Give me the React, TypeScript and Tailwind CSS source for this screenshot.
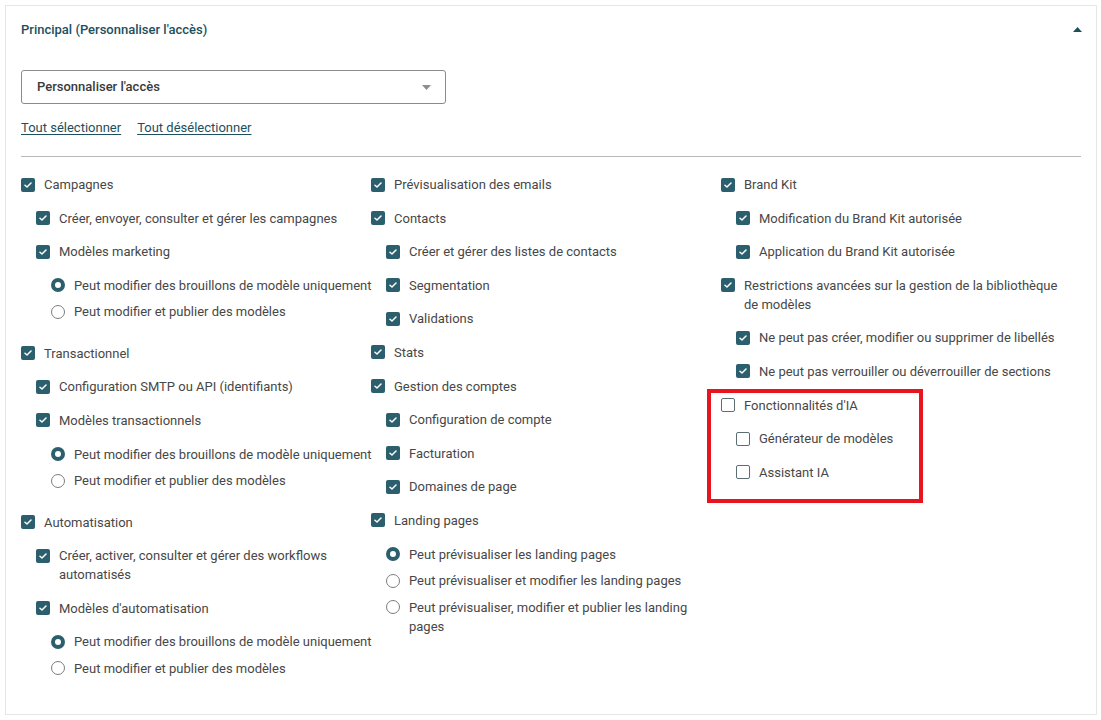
import React from 'react'

type Item = {
  label: string
  kind: 'check' | 'radio'
  on: boolean
  children?: Item[]
  highlight?: boolean
  nowrap?: boolean
}

const c = (label: string, on = true, children?: Item[]): Item => ({ label, kind: 'check', on, children })
const r = (label: string, on = false, nowrap = false): Item => ({ label, kind: 'radio', on, nowrap })

const col1: Item[] = [
  c('Campagnes', true, [
    c('Créer, envoyer, consulter et gérer les campagnes'),
    c('Modèles marketing', true, [
      r('Peut modifier des brouillons de modèle uniquement', true, true),
      r('Peut modifier et publier des modèles'),
    ]),
  ]),
  c('Transactionnel', true, [
    c('Configuration SMTP ou API (identifiants)'),
    c('Modèles transactionnels', true, [
      r('Peut modifier des brouillons de modèle uniquement', true, true),
      r('Peut modifier et publier des modèles'),
    ]),
  ]),
  c('Automatisation', true, [
    c('Créer, activer, consulter et gérer des workflows automatisés'),
    c("Modèles d'automatisation", true, [
      r('Peut modifier des brouillons de modèle uniquement', true, true),
      r('Peut modifier et publier des modèles'),
    ]),
  ]),
]

const col2: Item[] = [
  c('Prévisualisation des emails'),
  c('Contacts', true, [c('Créer et gérer des listes de contacts'), c('Segmentation'), c('Validations')]),
  c('Stats'),
  c('Gestion des comptes', true, [c('Configuration de compte'), c('Facturation'), c('Domaines de page')]),
  c('Landing pages', true, [
    r('Peut prévisualiser les landing pages', true),
    r('Peut prévisualiser et modifier les landing pages'),
    r('Peut prévisualiser, modifier et publier les landing pages'),
  ]),
]

const col3: Item[] = [
  c('Brand Kit', true, [c('Modification du Brand Kit autorisée'), c('Application du Brand Kit autorisée')]),
  c('Restrictions avancées sur la gestion de la bibliothèque de modèles', true, [
    c('Ne peut pas créer, modifier ou supprimer de libellés'),
    c('Ne peut pas verrouiller ou déverrouiller de sections'),
  ]),
  { ...c("Fonctionnalités d'IA", false, [c('Générateur de modèles', false), c('Assistant IA', false)]), highlight: true },
]

function Box({ on }: { on: boolean }) {
  if (!on)
    return <span className="mt-[2.5px] h-[14px] w-[14px] shrink-0 rounded-[2px] border border-[#5d6d75] bg-white" />
  return (
    <span className="mt-[2.5px] flex h-[14px] w-[14px] shrink-0 items-center justify-center rounded-[2px] bg-[#2b5f6e]">
      <svg width="8" height="6" viewBox="0 0 8 6" fill="none">
        <path d="M1 3.2L3 5L7 1" stroke="white" strokeWidth="1.5" strokeLinecap="round" strokeLinejoin="round" />
      </svg>
    </span>
  )
}

function Radio({ on }: { on: boolean }) {
  return on ? (
    <span className="mt-[2.5px] h-[14px] w-[14px] shrink-0 rounded-full border-[4px] border-[#2b5f6e] bg-white" />
  ) : (
    <span className="mt-[2.5px] h-[14px] w-[14px] shrink-0 rounded-full border border-[#7d7d7d] bg-white" />
  )
}

function Node({ item, last }: { item: Item; last?: boolean }) {
  const isRadio = item.kind === 'radio'
  return (
    <div className={item.highlight ? 'relative' : ''}>
      {item.highlight && (
        <div className="pointer-events-none absolute -left-[14px] -top-[7px] h-[114px] w-[216px] border-4 border-[#e8141e]" />
      )}
      <label
        className={`flex gap-[9px] leading-[19px] ${isRadio ? (last ? 'mb-[22.5px]' : 'mb-[7.5px]') : 'mb-[14.6px]'}`}
      >
        {isRadio ? <Radio on={item.on} /> : <Box on={item.on} />}
        <span className={item.nowrap ? 'whitespace-nowrap' : 'pr-3'}>{item.label}</span>
      </label>
      {item.children && (
        <div className="pl-[15px]">
          {item.children.map((ch, i) => (
            <Node key={ch.label} item={ch} last={i === item.children!.length - 1} />
          ))}
        </div>
      )}
    </div>
  )
}

export default function App() {
  return (
    <div className="min-h-[720px] bg-white p-[5px] text-[13px] text-[#474747]" style={{ fontFamily: 'Roboto, "Liberation Sans", sans-serif' }}>
      <div className="h-[710px] w-[1092px] border border-[#e6e6e6] px-[15px]">
        <div className="flex items-center justify-between pt-[14px] pb-[16px]">
          <h2 className="text-[13px] font-medium leading-[19px] text-[#1d4f5d]">Principal (Personnaliser l'accès)</h2>
          <svg width="9" height="5" viewBox="0 0 9 5" className="mr-[-1px]">
            <path d="M0 5L4.5 0L9 5Z" fill="#1d4f5d" />
          </svg>
        </div>

        <div className="mt-[15px] flex h-[34px] w-[425px] items-center justify-between rounded-[3px] border border-[#8a8a8a] pl-[15px] pr-[14px]">
          <span className="font-medium text-[#3a3a3a]">Personnaliser l'accès</span>
          <svg width="9" height="5" viewBox="0 0 9 5">
            <path d="M0 0L9 0L4.5 5Z" fill="#8a8f93" />
          </svg>
        </div>

        <div className="mt-[14px] flex gap-[16px] leading-[19px] text-[#1d4f5d]">
          <a href="#" className="underline underline-offset-2">Tout sélectionner</a>
          <a href="#" className="underline underline-offset-2">Tout désélectionner</a>
        </div>

        <div className="mt-[19px] h-px bg-[#b9b9b9]" />

        <div className="mt-[18px] grid grid-cols-[350px_350px_1fr]">
          {[col1, col2, col3].map((col, ci) => (
            <div key={ci}>
              {col.map((it) => (
                <Node key={it.label} item={it} />
              ))}
            </div>
          ))}
        </div>
      </div>
    </div>
  )
}
